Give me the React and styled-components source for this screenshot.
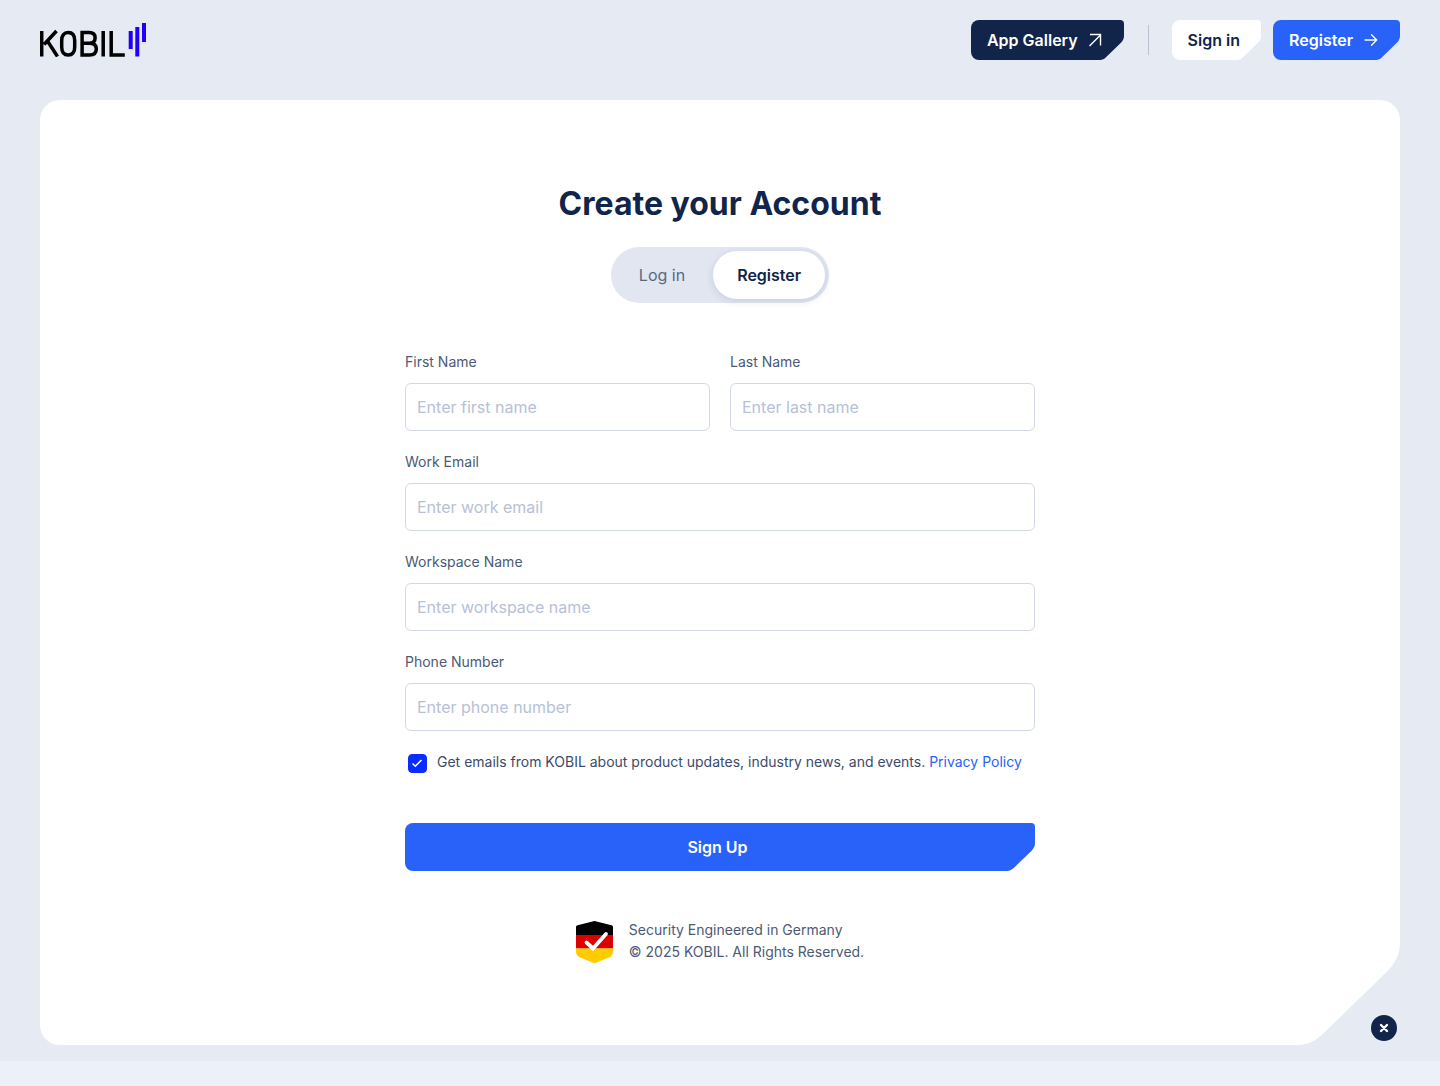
import React, {useState} from "react";
import styled, {createGlobalStyle, css} from "styled-components";


const fields = [
  {id: "firstName", label: "First Name", placeholder: "Enter first name", type: "text", half: true},
  {id: "lastName", label: "Last Name", placeholder: "Enter last name", type: "text", half: true},
  {id: "email", label: "Work Email", placeholder: "Enter work email", type: "email"},
  {id: "workspace", label: "Workspace Name", placeholder: "Enter workspace name", type: "text"},
  {id: "phone", label: "Phone Number", placeholder: "Enter phone number", type: "tel"},
];

function Logo() {
  return (
    <svg width="107" height="34" viewBox="0 0 107 34" role="img" aria-label="KOBIL">
      <g fill="none" stroke="#000" strokeWidth="3.5">
        <path d="M1.7 8v25.5M16.5 8 4 21.5M7.6 18.2 17.5 33.5" />
        <path d="M21.7 17.5c0-5.2 2.3-8 6.500-8s6.500 2.8 6.500 8v6.6c0 5.2-2.3 8-6.500 8s-6.500-2.8-6.500-8z" />
        <path d="M42.1 9.6v22.3h7.4c4.3 0 6.8-2.1 6.8-6 0-3.7-2.4-5.7-6.8-5.7h-7.4 7c3.8 0 6-1.9 6-5.3s-2.1-5.3-6-5.3z" />
        <path d="M63.2 8v25.5M71.2 8v24h13.6" />
      </g>
      <g fill="#1f00ff">
        <path d="M88.7 8h4v18h-4zM95.3 4h4v29.5h-4zM102 0h4v19h-4z" />
      </g>
    </svg>
  )
}

function Shield() {
  return (
    <svg width="37" height="44" viewBox="0 -2 37 44" aria-hidden="true">
      <path d="M0 14V6.200C0 5 .6 4.500 1.600 4.200L17.500.2c.8-.2 1.300-.2 2 0l16 4c1 .3 1.500.8 1.500 2V14z" fill="#000" />
      <path d="M0 14h37v13.500H0z" fill="#d00" />
      <path d="M0 27.500h37v3c0 2.800-1.400 4.600-3.600 5.800l-13.200 5.500c-1 .4-2.400.4-3.400 0L3.800 36.300C1.400 35 0 33.300 0 30.500z" fill="#fc0" />
      <path d="m10.500 21.500 6.500 6L30 13" fill="none" stroke="#fff" strokeWidth="3.8" strokeLinecap="round" />
    </svg>
  )
}

// covers the bottom right corner with the colour behind the shape
function Corner({size, color}) {
  return (
    <CornerSvg width={size} height={size} viewBox="0 0 28 28" color={color} aria-hidden="true">
      <path d="M29 0h-1c0 3-1.200 5.600-3.600 7.900L7 24.800C5 26.800 2.700 28 0 28v1h29z" />
    </CornerSvg>
  )
}


function App() {
  const [tab, setTab] = useState("register")
  const [agree, setAgree] = useState(true)

  return (
    <>
      <GlobalStyle />
      <Page>
        <Header>
          <HomeLink href="/"><Logo /></HomeLink>
          <Nav>
            <NavLink href="/gallery" $bg="#11244a">
              App Gallery
              <svg width="15" height="16" viewBox="0 0 15 16" fill="none" stroke="currentColor" strokeWidth="1.4">
                <path d="M1.500 14 12.500 3M2 2.500h10.500V13.500" />
              </svg>
              <Corner size={24} color="#e6eaf3" />
            </NavLink>
            <Divider />
            <NavLink href="/signin" $bg="#fff" $color="#11244a">
              Sign in
              <Corner size={24} color="#e6eaf3" />
            </NavLink>
            <NavLink href="/register" $bg="#2962f8">
              Register
              <svg width="16" height="16" viewBox="0 0 16 16" fill="none" stroke="currentColor" strokeWidth="1.3" strokeLinecap="round" strokeLinejoin="round">
                <path d="M2 8h11.500M8.500 2.700 13.700 8l-5.200 5.300" />
              </svg>
              <Corner size={24} color="#e6eaf3" />
            </NavLink>
          </Nav>
        </Header>

        <Card>
          <Title>Create your Account</Title>
          <Tabs>
            <Tab type="button" $on={tab === "login"} onClick={() => setTab("login")}>Log in</Tab>
            <Tab type="button" $on={tab === "register"} onClick={() => setTab("register")}>Register</Tab>
          </Tabs>

          <Form onSubmit={(e) => e.preventDefault()}>
            {fields.map((f) => {
              return (
                <Field key={f.id} $half={f.half}>
                  <Label htmlFor={f.id}>{f.label}</Label>
                  <Input id={f.id} type={f.type} placeholder={f.placeholder} />
                </Field>
              )
            })}
            <Consent>
              <Check id="agree" type="checkbox" checked={agree} onChange={() => setAgree(!agree)} />
              <CheckMark width="24" height="24" viewBox="0 0 24 24" aria-hidden="true">
                <path d="m7.500 12.500 2.800 2.800L16.500 9" />
              </CheckMark>
              <ConsentText>
                <label htmlFor="agree">Get emails from KOBIL about product updates, industry news, and events.</label>{" "}
                <PolicyLink href="/privacy">Privacy Policy</PolicyLink>
              </ConsentText>
            </Consent>
            <SignUpBtn type="submit">
              Sign Up
              <Corner size={28} color="#fff" />
            </SignUpBtn>
          </Form>

          <Security>
            <Shield />
            <p>Security Engineered in Germany<br />© 2025 KOBIL. All Rights Reserved.</p>
          </Security>
          <Corner size={102} color="#e6eaf3" />
        </Card>
      </Page>
      <CloseBtn type="button" aria-label="Close">
        <svg width="10" height="10" viewBox="0 0 10 10" stroke="#fff" strokeWidth="2.4" strokeLinecap="round">
          <path d="m2 2 6 6M8 2 2 8" />
        </svg>
      </CloseBtn>
    </>
  )
}

const GlobalStyle = createGlobalStyle`
* {
  box-sizing: border-box;
}

body {
  margin: 0;
  background-color: #edf0f9;
  color: #4b5a76;
  font-family: Inter, "Liberation Sans", sans-serif;
  font-size: 14px;
  line-height: 22px;
}

button, input {
  font-family: inherit;
}
`;

const Page = styled.div`
  padding: 20px 40px 16px;
  background-color: #e6eaf3;
`;

const Header = styled.header`
  display: flex;
  justify-content: space-between;
  align-items: center;
  height: 40px;
`;

const HomeLink = styled.a`
  display: flex;
`;

const Nav = styled.nav`
  display: flex;
  align-items: center;
  gap: 12px;
`;

const CornerSvg = styled.svg`
  position: absolute;
  right: 0;
  bottom: 0;
  fill: ${(props) => props.color};
`;

const cutShape = css`
  position: relative;
  overflow: hidden;
  border: none;
  border-radius: 8px 4px 0 8px;
  font-size: 16px;
  font-weight: 600;
`;

const NavLink = styled.a`
  ${cutShape}
  display: flex;
  align-items: center;
  gap: 10px;
  height: 40px;
  padding: 0 21px 0 16px;
  background-color: ${(props) => props.$bg};
  color: ${(props) => props.$color || "#fff"};
  text-decoration: none;
`;

const Divider = styled.span`
  width: 1px;
  height: 30px;
  margin: 0 11px 0 12px;
  background-color: #b9c1d3;
`;

const Card = styled.main`
  position: relative;
  display: flex;
  flex-direction: column;
  align-items: center;
  margin-top: 40px;
  padding: 80px 20px 82px;
  border-radius: 20px 20px 0 20px;
  background-color: #fff;
`;

const Title = styled.h1`
  margin: 0 0 19px;
  color: #11244a;
  font-size: 32px;
  font-weight: 700;
  line-height: 48px;
`;

const Tabs = styled.div`
  display: flex;
  gap: 4px;
  padding: 4px;
  border-radius: 28px;
  background-color: #e1e6f1;
`;

const Tab = styled.button`
  height: 48px;
  padding: 0 24px;
  border: none;
  border-radius: 24px;
  background-color: ${(props) => (props.$on ? "#fff" : "transparent")};
  box-shadow: ${(props) => (props.$on ? "0 2px 8px rgba(17, 36, 74, 0.12)" : "none")};
  color: ${(props) => (props.$on ? "#11244a" : "#5b6882")};
  font-size: 16px;
  font-weight: ${(props) => (props.$on ? 600 : 400)};
  cursor: pointer;
`;

const Form = styled.form`
  display: grid;
  grid-template-columns: 1fr 1fr;
  gap: 20px;
  width: 100%;
  max-width: 630px;
  margin-top: 48px;
`;

const Field = styled.div`
  display: flex;
  flex-direction: column;
  gap: 10px;
  grid-column: ${(props) => (props.$half ? "auto" : "1 / -1")};
`;

const Label = styled.label`
  color: #4b5a76;
`;

const Input = styled.input`
  width: 100%;
  height: 48px;
  padding: 0 11px;
  border: 1px solid #d3d8e6;
  border-radius: 6px;
  background-color: #fff;
  color: #11244a;
  font-size: 16px;

  &::placeholder {
    color: #b7c1d5;
  }
`;

const Consent = styled.div`
  display: grid;
  grid-template-columns: 24px 1fr;
  align-items: start;
  column-gap: 8px;
  grid-column: 1 / -1;
`;

const Check = styled.input`
  grid-area: 1 / 1;
  appearance: none;
  width: 19px;
  height: 19px;
  margin: 0;
  place-self: center;
  border: 1px solid #0a2cff;
  border-radius: 4px;
  background-color: #fff;
  cursor: pointer;

  &:checked {
    background-color: #0a2cff;
  }
`;

const CheckMark = styled.svg`
  grid-area: 1 / 1;
  pointer-events: none;
  fill: none;
  stroke: #fff;
  stroke-width: 1.5;
  z-index: 1;
`;

const ConsentText = styled.div`
  color: #3b4b6b;
`;

const PolicyLink = styled.a`
  color: #2962f8;
  text-decoration: none;
`;

const SignUpBtn = styled.button`
  ${cutShape}
  grid-column: 1 / -1;
  height: 48px;
  margin-top: 28px;
  padding: 0 11px 0 6px;
  background-color: #2962f8;
  color: #fff;
  cursor: pointer;
`;

const Security = styled.div`
  display: flex;
  align-items: center;
  gap: 16px;
  margin-top: 48px;

  p {
    margin: 0;
  }
`;

const CloseBtn = styled.button`
  position: fixed;
  right: 43px;
  bottom: 45px;
  display: flex;
  justify-content: center;
  align-items: center;
  width: 26px;
  height: 26px;
  padding: 0;
  border: none;
  border-radius: 50%;
  background-color: #11244a;
  cursor: pointer;
`;


export default App;
